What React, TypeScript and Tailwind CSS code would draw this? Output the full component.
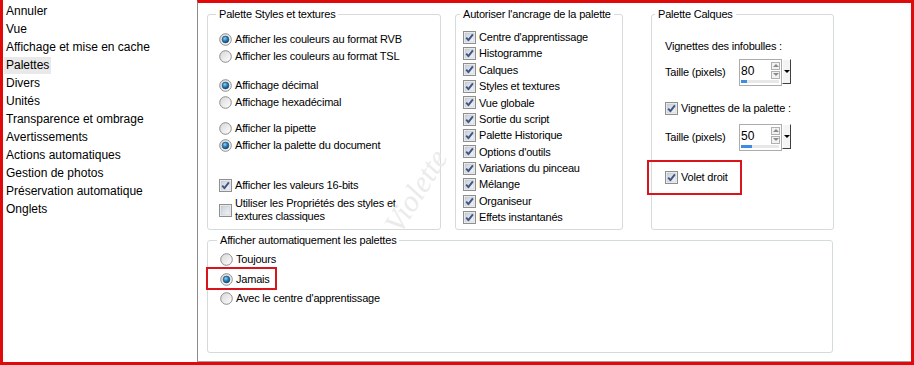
import React from 'react'

const font = { fontFamily: '"Liberation Sans", Arial, sans-serif' }

const menu = [
  'Annuler',
  'Vue',
  'Affichage et mise en cache',
  'Palettes',
  'Divers',
  'Unités',
  'Transparence et ombrage',
  'Avertissements',
  'Actions automatiques',
  'Gestion de photos',
  'Préservation automatique',
  'Onglets',
]

const docking = [
  "Centre d'apprentissage",
  'Histogramme',
  'Calques',
  'Styles et textures',
  'Vue globale',
  'Sortie du script',
  'Palette Historique',
  "Options d'outils",
  'Variations du pinceau',
  'Mélange',
  'Organiseur',
  'Effets instantanés',
]

const Defs = () => (
  <svg width="0" height="0" className="absolute">
    <defs>
      <linearGradient id="rg" x1="0" y1="0" x2="1" y2="1">
        <stop offset="0" stopColor="#d6d6d6" />
        <stop offset="1" stopColor="#ffffff" />
      </linearGradient>
      <radialGradient id="rb" cx="0.4" cy="0.35" r="0.7">
        <stop offset="0" stopColor="#8fd3f5" />
        <stop offset="0.5" stopColor="#2a7fb8" />
        <stop offset="1" stopColor="#0d3c61" />
      </radialGradient>
      <linearGradient id="cg" x1="0" y1="0" x2="1" y2="1">
        <stop offset="0" stopColor="#c9ced8" />
        <stop offset="1" stopColor="#f5f6f8" />
      </linearGradient>
    </defs>
  </svg>
)

const Radio = ({ checked }: { checked?: boolean }) => (
  <svg width="13" height="13" viewBox="0 0 13 13" className="shrink-0">
    <circle cx="6.5" cy="6.5" r="5.8" fill="url(#rg)" stroke="#8d8d8d" strokeWidth="1" />
    {checked && <circle cx="6.5" cy="6.5" r="3.4" fill="url(#rb)" stroke="#1c4d75" strokeWidth="0.6" />}
  </svg>
)

const Check = ({ checked }: { checked?: boolean }) => (
  <svg width="13" height="13" viewBox="0 0 13 13" className="shrink-0">
    <rect x="0.5" y="0.5" width="12" height="12" fill="#f6f6f6" stroke="#8e8f8f" />
    <rect x="2" y="2" width="9" height="9" fill="url(#cg)" stroke="#b9bec8" strokeWidth="0.5" />
    {checked && (
      <path d="M3.2 6.6 L5.4 9.2 L9.9 3.4" fill="none" stroke="#3f5585" strokeWidth="1.9" strokeLinejoin="round" />
    )}
  </svg>
)

const Option = ({ radio, checked, children }: { radio?: boolean; checked?: boolean; children: React.ReactNode }) => (
  <div className="flex items-center gap-[3px] h-[17px] whitespace-nowrap">
    {radio ? <Radio checked={checked} /> : <Check checked={checked} />}
    <span>{children}</span>
  </div>
)

const Spin = ({ value, fill }: { value: string; fill: number }) => (
  <div className="flex items-start">
    <div className="relative w-[43px] h-[27px] border border-[#acacac] bg-white">
      <span className="absolute left-[1px] top-[2px] text-[12px] tracking-normal">{value}</span>
      <div className="absolute left-[31px] top-[2px] flex flex-col gap-[1px]">
        <div className="w-[9px] h-[8px] border border-[#b0b0b0] bg-[#f2f2f2] flex items-center justify-center">
          <div className="w-0 h-0 border-l-[3px] border-r-[3px] border-b-[3px] border-l-transparent border-r-transparent border-b-[#8a8a8a]" />
        </div>
        <div className="w-[9px] h-[8px] border border-[#b0b0b0] bg-[#f2f2f2] flex items-center justify-center">
          <div className="w-0 h-0 border-l-[3px] border-r-[3px] border-t-[3px] border-l-transparent border-r-transparent border-t-[#8a8a8a]" />
        </div>
      </div>
      <div className="absolute left-[1px] right-[2px] bottom-[2px] h-[3px] bg-[#e8e8e8]">
        <div className="h-full bg-[#3d8ee0]" style={{ width: fill }} />
      </div>
    </div>
    <div className="w-[9px] h-[25px] bg-[#f4f4f4] border-t border-l border-t-white border-l-white border-r border-b border-r-[#404040] border-b-[#404040] flex items-center justify-center">
      <div className="w-0 h-0 border-l-[3px] border-r-[3px] border-t-[3px] border-l-transparent border-r-transparent border-t-black" />
    </div>
  </div>
)

const Group = ({
  title,
  className,
  legend,
  children,
}: {
  title: string
  className: string
  legend: string
  children: React.ReactNode
}) => (
  <fieldset className={`border border-[#d5dadd] rounded-[3px] p-0 min-w-0 shrink-0 ${className}`}>
    <legend className={`px-[3px] leading-[13px] whitespace-nowrap ${legend}`}>{title}</legend>
    {children}
  </fieldset>
)

export default function App() {
  return (
    <div
      style={font}
      className="relative w-[914px] h-[365px] flex bg-white text-[11px] tracking-[-0.2px] text-black border-l-[3px] border-r-[3px] border-b-[3px] border-[#e10a0a] overflow-hidden"
    >
      <Defs />
      <div className="w-[194px] shrink-0 bg-white pt-[2px] text-[12px] tracking-normal">
        {menu.map((m) => (
          <div key={m} className="h-[18px] flex items-center">
            <span className={`px-[2px] ml-[1px] leading-[17px] ${m === 'Palettes' ? 'bg-[#e9e9e9]' : ''}`}>{m}</span>
          </div>
        ))}
      </div>

      <div className="relative flex-1 border-t-[3px] border-t-[#e10a0a] border-l border-l-[#8c8c8c] border-b border-b-[#a0a0a0] pl-[9px] pt-[5px]">
        <div className="flex">
          <Group title="Palette Styles et textures" legend="ml-[8px]" className="w-[234px] h-[222px]">
            <div className="pl-[11px] pt-[10px]">
              <Option radio checked>Afficher les couleurs au format RVB</Option>
              <Option radio>Afficher les couleurs au format TSL</Option>
              <div className="mt-[12px]" />
              <Option radio checked>Affichage décimal</Option>
              <Option radio>Affichage hexadécimal</Option>
              <div className="mt-[9px]" />
              <Option radio>Afficher la pipette</Option>
              <Option radio checked>Afficher la palette du document</Option>
              <div className="mt-[23px]" />
              <Option checked>Afficher les valeurs 16-bits</Option>
              <div className="flex items-center gap-[3px] mt-[3px]">
                <Check />
                <span className="leading-[13px]">
                  Utiliser les Propriétés des styles et
                  <br />
                  textures classiques
                </span>
              </div>
            </div>
          </Group>

          <Group title="Autoriser l'ancrage de la palette" legend="ml-[4px]" className="ml-[14px] w-[168px] h-[222px]">
            <div className="pl-[7px] pt-[8px]">
              {docking.map((d) => (
                <div key={d} className="flex items-center gap-[3px] h-[16.4px] whitespace-nowrap">
                  <Check checked />
                  <span>{d}</span>
                </div>
              ))}
            </div>
          </Group>

          <Group title="Palette Calques" legend="ml-[3px]" className="ml-[28px] w-[183px] h-[222px]">
            <div className="pl-[13px] pt-[17px]">
              <div>Vignettes des infobulles :</div>
              <div className="flex items-center mt-[4px]">
                <span className="w-[74px]">Taille (pixels)</span>
                <Spin value="80" fill={6} />
              </div>
              <div className="mt-[14px] flex items-center gap-[3px] h-[17px]">
                <Check checked />
                <span>Vignettes de la palette :</span>
              </div>
              <div className="flex items-center mt-[7px]">
                <span className="w-[74px]">Taille (pixels)</span>
                <Spin value="50" fill={11} />
              </div>
              <div className="mt-[18px] flex items-center gap-[3px] h-[17px]">
                <Check checked />
                <span>Volet droit</span>
              </div>
            </div>
          </Group>
        </div>

        <Group title="Afficher automatiquement les palettes" legend="ml-[9px]" className="mt-[4px] w-[626px] h-[119px]">
          <div className="flex flex-col gap-[2.5px] pl-[12px] pt-[4px]">
            <Option radio>Toujours</Option>
            <Option radio checked>Jamais</Option>
            <Option radio>Avec le centre d'apprentissage</Option>
          </div>
        </Group>

        <span
          className="absolute left-[172px] top-[165px] -rotate-[58deg] text-[30px] italic tracking-normal text-[#ebebeb] pointer-events-none"
          style={{ fontFamily: '"Liberation Serif", serif' }}
        >
          Violette
        </span>

        <div className="absolute left-[449px] top-[157px] w-[95px] h-[35px] border-2 border-[#d9141b]" />
        <div className="absolute left-[8px] top-[264px] w-[71px] h-[23px] border-2 border-[#d9141b]" />
      </div>
    </div>
  )
}
